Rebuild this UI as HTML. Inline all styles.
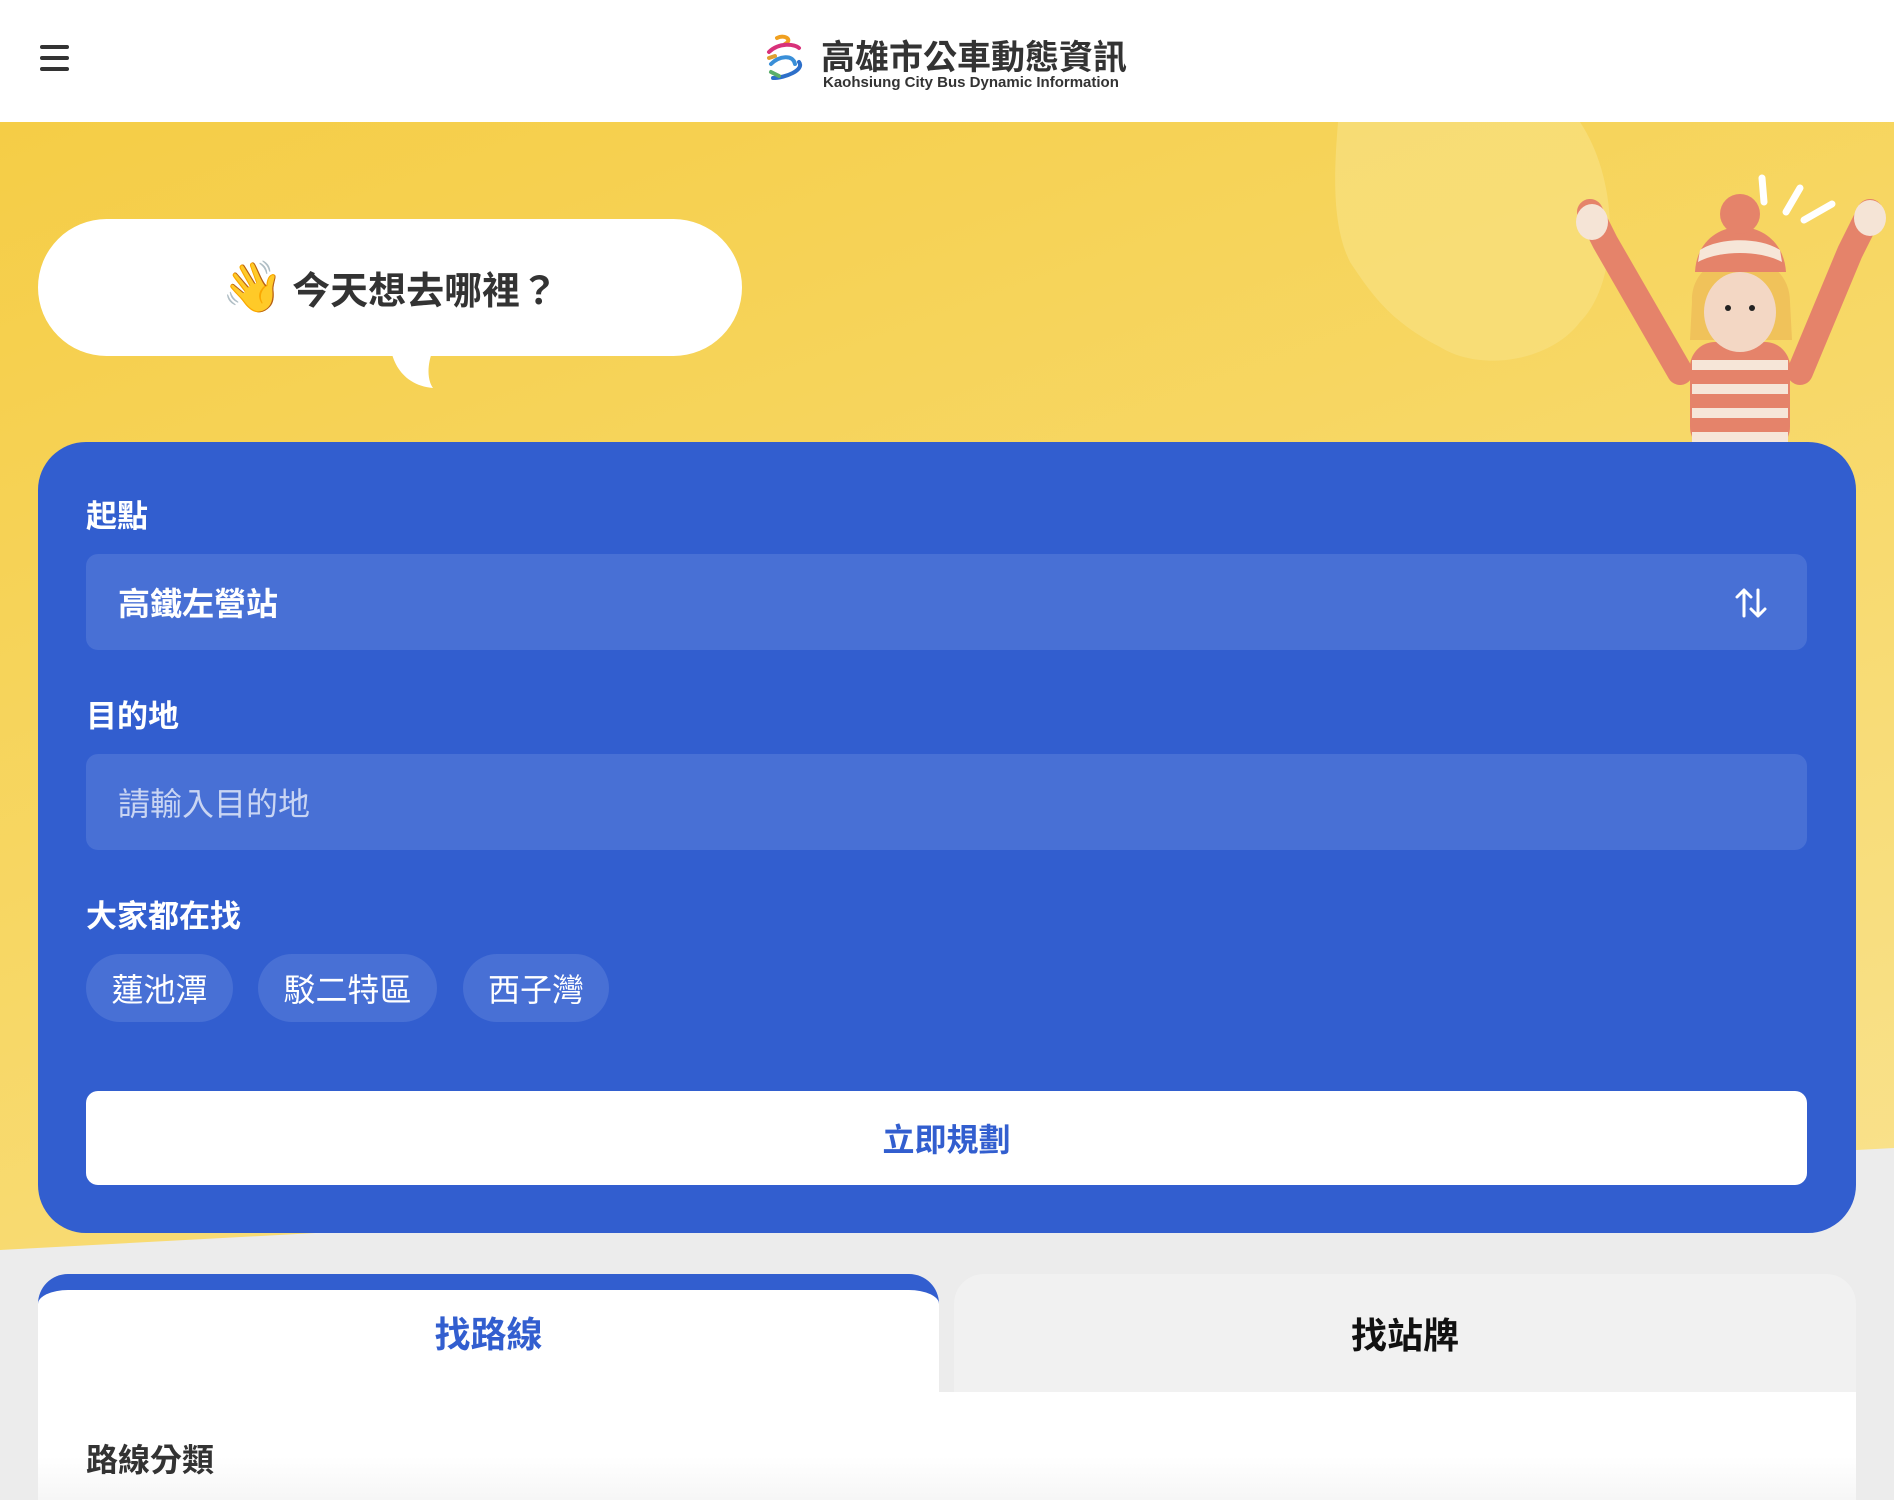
<!DOCTYPE html>
<html><head><meta charset="utf-8"><style>
*{margin:0;padding:0;box-sizing:border-box}
body{width:1894px;height:1500px;overflow:hidden;position:relative;background:#ececec;font-family:"Liberation Sans","Noto Sans CJK TC",sans-serif}
.abs{position:absolute}
.hdr{left:0;top:0;width:1894px;height:122px;background:#fff}
.yel{left:0;top:122px;width:1894px;height:1140px;background:linear-gradient(160deg,#f5cd46 0%,#f7d764 45%,#f9e28e 100%);clip-path:polygon(0 0,100% 0,100% 1026px,0 1128px)}
.bub{left:38px;top:219px;width:704px;height:137px;background:#fff;border-radius:69px;display:flex;align-items:center;justify-content:center;font-size:38px;font-weight:bold;color:#333}
.card{left:38px;top:442px;width:1818px;height:791px;background:#325ecf;border-radius:48px}
.lbl{color:#fff;font-size:31px;font-weight:bold;left:86px}
.inp{left:86px;width:1721px;height:96px;background:#4870d5;border-radius:12px;color:#fff;font-size:32px;padding-left:32px;display:flex;align-items:center}
.chip{top:954px;height:68px;background:#4870d5;border-radius:34px;color:#fff;font-size:32px;display:flex;align-items:center;justify-content:center}
.btn{left:86px;top:1091px;width:1721px;height:94px;background:#fff;border-radius:12px;color:#325ecf;font-size:32px;font-weight:bold;display:flex;align-items:center;justify-content:center}
.tab{top:1274px;height:118px;width:902px;border-radius:30px 30px 0 0;font-size:36px;font-weight:bold;display:flex;align-items:center;justify-content:center}
</style></head><body>
<div class="abs hdr"></div>
<svg class="abs" style="left:40px;top:43px" width="30" height="30" viewBox="0 0 30 30"><rect x="0" y="2" width="29" height="4" rx="2" fill="#333"/><rect x="0" y="13" width="29" height="4" rx="2" fill="#333"/><rect x="0" y="24" width="29" height="4" rx="2" fill="#333"/></svg>
<svg class="abs" style="left:765px;top:34px" width="44" height="48" viewBox="0 0 44 48"><path d="M12 4 C20 0 28 6 20 10" stroke="#f0a020" stroke-width="4" fill="none" stroke-linecap="round"/><path d="M4 18 C14 8 30 10 34 14" stroke="#d8317a" stroke-width="4" fill="none" stroke-linecap="round"/><path d="M6 30 C14 22 28 20 30 30" stroke="#3a8fd8" stroke-width="4" fill="none" stroke-linecap="round"/><path d="M8 44 C20 44 40 36 34 28" stroke="#2d6fc9" stroke-width="4" fill="none" stroke-linecap="round"/><path d="M4 24 L10 22" stroke="#e0a030" stroke-width="4" stroke-linecap="round"/><path d="M6 38 L14 42" stroke="#5aae6a" stroke-width="4" stroke-linecap="round"/></svg>
<div class="abs" style="left:821px;top:30px;font-size:34px;font-weight:bold;color:#333">高雄市公車動態資訊</div>
<div class="abs" style="left:823px;top:74px;font-size:15px;font-weight:bold;color:#333">Kaohsiung City Bus Dynamic Information</div>
<div class="abs yel"></div>
<svg class="abs" style="left:1330px;top:122px" width="564" height="330" viewBox="0 0 564 330">
<path d="M8 0 L250 0 C290 60 290 160 250 200 C220 240 150 250 110 225 C60 200 40 170 20 140 C0 100 5 40 8 0Z" fill="#f8df7c" opacity=".8"/>
<g stroke="#fff" stroke-width="7" stroke-linecap="round" fill="none"><path d="M432 56 L434 80"/><path d="M470 66 L456 90"/><path d="M502 82 L474 98"/></g>
<path d="M260 90 L275 120 L350 250" stroke="#e5836a" stroke-width="26" fill="none" stroke-linecap="round"/>
<path d="M540 90 L520 130 L470 250" stroke="#e5836a" stroke-width="26" fill="none" stroke-linecap="round"/>
<ellipse cx="262" cy="100" rx="16" ry="18" fill="#f5e4d6"/><ellipse cx="540" cy="96" rx="16" ry="18" fill="#f5e4d6"/>
<rect x="360" y="220" width="100" height="110" rx="25" fill="#e5836a"/>
<g fill="#f6e6d8"><rect x="362" y="238" width="96" height="10"/><rect x="362" y="262" width="96" height="10"/><rect x="362" y="286" width="96" height="10"/><rect x="362" y="310" width="96" height="10"/></g>
<path d="M362 180 C360 120 460 120 460 180 L462 218 L360 218Z" fill="#f0c25a"/>
<ellipse cx="410" cy="190" rx="36" ry="40" fill="#f3d7c4"/>
<circle cx="398" cy="186" r="3" fill="#222"/><circle cx="422" cy="186" r="3" fill="#222"/>
<path d="M365 150 C368 90 452 90 456 150Z" fill="#e5836a"/>
<path d="M370 128 C390 115 430 115 450 128 L452 140 C430 128 390 128 368 140Z" fill="#f6e6d8"/>
<circle cx="410" cy="92" r="20" fill="#e5836a"/>
</svg>
<div class="abs bub"><span style="font-size:50px;margin-right:8px">👋</span>今天想去哪裡？</div>
<svg class="abs" style="left:385px;top:350px" width="60" height="40" viewBox="0 0 60 40"><path d="M6 0 C10 20 24 36 48 38 C42 30 42 14 48 0Z" fill="#fff"/></svg>
<div class="abs card"></div>
<div class="abs lbl" style="top:491px">起點</div>
<div class="abs inp" style="top:554px;font-weight:bold">高鐵左營站</div>
<svg class="abs" style="left:1734px;top:586px" width="34" height="34" viewBox="0 0 34 34" fill="none" stroke="#fff" stroke-width="3" stroke-linecap="round" stroke-linejoin="round"><path d="M10 30 V4 M3 11 L10 4 L17 11"/><path d="M24 4 V30 M17 23 L24 30 L31 23"/></svg>
<div class="abs lbl" style="top:691px">目的地</div>
<div class="abs inp" style="top:754px;color:#c9d5f3">請輸入目的地</div>
<div class="abs lbl" style="top:891px">大家都在找</div>
<div class="abs chip" style="left:86px;width:147px">蓮池潭</div>
<div class="abs chip" style="left:258px;width:179px">駁二特區</div>
<div class="abs chip" style="left:463px;width:146px">西子灣</div>
<div class="abs btn">立即規劃</div>
<div class="abs" style="left:38px;top:1392px;width:1818px;height:108px;background:linear-gradient(#fff 60%,#f6f6f6)"></div>
<div class="abs tab" style="left:38px;width:901px;background:#fff;border-top:16px solid #325ecf;color:#325ecf;padding-bottom:18px">找路線</div>
<div class="abs tab" style="left:954px;background:#f1f1f1;color:#111">找站牌</div>
<div class="abs" style="left:86px;top:1435px;font-size:32px;font-weight:bold;color:#333">路線分類</div>
</body></html>
